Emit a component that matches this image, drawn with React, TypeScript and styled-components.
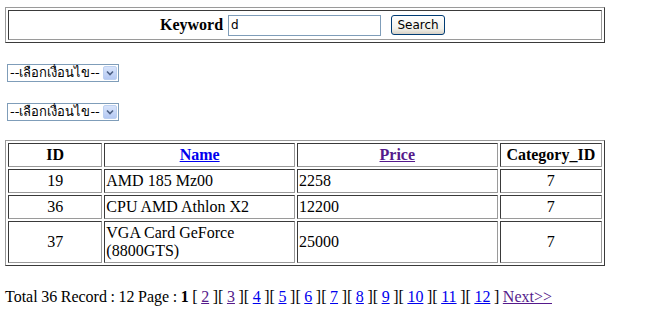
import { useState } from "react";
import styled, { createGlobalStyle } from "styled-components";

const GlobalStyle = createGlobalStyle`
  body {
    margin: 7px 5px;
    background: #ffffff;
    font-family: "Liberation Serif", "Times New Roman", serif;
    font-size: 16px;
    color: #000000;
  }
`;

const OutsetTable = styled.table<{ $w: number }>`
  width: ${({ $w }) => $w}px;
  border-collapse: separate;
  border-spacing: 2px;
  border: 1px solid;
  border-color: #9a9a9a #3a3a3a #3a3a3a #9a9a9a;
`;

const Cell = styled.td<{ $align?: string; $w?: number }>`
  border: 1px solid;
  border-color: #3a3a3a #9a9a9a #9a9a9a #3a3a3a;
  padding: 2px 1px;
  text-align: ${({ $align }) => $align || "left"};
  vertical-align: middle;
  line-height: 18px;
  ${({ $w }) => ($w ? `width: ${$w}px;` : "")}
`;

const HeadCell = styled(Cell).attrs({ as: "th" })`
  font-weight: bold;
  text-align: center;
`;

const SearchBar = styled.div`
  display: flex;
  align-items: center;
  justify-content: center;
  height: 26px;
  padding-right: 5px;
`;

const Label = styled.b`
  font-size: 16px;
  margin-right: 5px;
`;

const TextBox = styled.input`
  box-sizing: border-box;
  width: 153px;
  height: 21px;
  padding: 1px 2px;
  border: 1px solid #7f9db9;
  font-family: "DejaVu Sans", Tahoma, sans-serif;
  font-size: 12px;
  outline: none;
`;

const XpButton = styled.button`
  margin-left: 10px;
  height: 20px;
  width: 54px;
  padding: 0;
  border: 1px solid #003c74;
  border-radius: 3px;
  background: linear-gradient(#ffffff, #f2f2ec 70%, #d6d0c5);
  font-family: "DejaVu Sans", Tahoma, sans-serif;
  font-size: 12px;
  color: #000;
`;

const SelectRow = styled.div<{ $top: number }>`
  display: flex;
  margin-top: ${({ $top }) => $top}px;
  height: 18px;
  padding-left: 2px;
`;

const SelectBox = styled.div`
  display: flex;
  align-items: center;
  height: 18px;
  box-sizing: border-box;
  border: 1px solid #7f9db9;
  background: #fff;
  font-family: "DejaVu Sans", Tahoma, sans-serif;
  font-size: 13px;
`;

const SelectText = styled.span`
  padding: 0 2px 0 2px;
  line-height: 16px;
  white-space: nowrap;
`;

const ArrowBox = styled.span`
  display: flex;
  align-items: center;
  justify-content: center;
  width: 14px;
  height: 14px;
  margin: 1px;
  border-radius: 2px;
  border: 1px solid #bcd0f0;
  box-sizing: border-box;
  background: linear-gradient(#d8e4fb, #b5c9f3);
`;

const DataWrap = styled.div`
  margin-top: 19px;
`;

const Link = styled.a<{ $visited?: boolean }>`
  color: ${({ $visited }) => ($visited ? "#551a8b" : "#0000ee")};
  text-decoration: underline;
  cursor: pointer;
`;

const Footer = styled.div`
  margin-top: 21px;
  line-height: 19px;
  white-space: nowrap;
  word-spacing: -0.45px;
`;

function Chevron() {
  return (
    <svg width="8" height="6" viewBox="0 0 8 6">
      <path d="M1 1.5 L4 4.5 L7 1.5" stroke="#4d6185" strokeWidth="1.6" fill="none" />
    </svg>
  );
}

function ConditionSelect({ top }: { top: number }) {
  return (
    <SelectRow $top={top}>
      <SelectBox>
        <SelectText>--เลือกเงื่อนไข--</SelectText>
        <ArrowBox>
          <Chevron />
        </ArrowBox>
      </SelectBox>
    </SelectRow>
  );
}

const products = [
  { id: 19, name: "AMD 185 Mz00", price: 2258, cat: 7 },
  { id: 36, name: "CPU AMD Athlon X2", price: 12200, cat: 7 },
  { id: 37, name: "VGA Card GeForce (8800GTS)", price: 25000, cat: 7 },
];

const visitedPages = [2, 3];

export default function App() {
  const [keyword, setKeyword] = useState("d");

  return (
    <>
      <GlobalStyle />
      <OutsetTable $w={600}>
        <tbody>
          <tr>
            <Cell $align="center" style={{ padding: 1 }}>
              <SearchBar>
                <Label>Keyword</Label>
                <TextBox value={keyword} onChange={(e) => setKeyword(e.target.value)} />
                <XpButton>Search</XpButton>
              </SearchBar>
            </Cell>
          </tr>
        </tbody>
      </OutsetTable>

      <ConditionSelect top={21} />
      <ConditionSelect top={21} />

      <DataWrap>
        <OutsetTable $w={600}>
          <thead>
            <tr>
              <HeadCell $w={90}>ID</HeadCell>
              <HeadCell $w={186}>
                <Link>Name</Link>
              </HeadCell>
              <HeadCell $w={196}>
                <Link $visited>Price</Link>
              </HeadCell>
              <HeadCell $w={98}>Category_ID</HeadCell>
            </tr>
          </thead>
          <tbody>
            {products.map((p) => (
              <tr key={p.id}>
                <Cell $align="center">{p.id}</Cell>
                <Cell>{p.name}</Cell>
                <Cell>{p.price}</Cell>
                <Cell $align="center">{p.cat}</Cell>
              </tr>
            ))}
          </tbody>
        </OutsetTable>
      </DataWrap>

      <Footer>
        Total 36 Record : 12 Page : <b>1</b> [{" "}
        {Array.from({ length: 11 }, (_, i) => i + 2).map((n, i) => (
          <span key={n}>
            {i > 0 && "][ "}
            <Link $visited={visitedPages.includes(n)}>{n}</Link>{" "}
          </span>
        ))}
        ] <Link $visited>Next&gt;&gt;</Link>
      </Footer>
    </>
  );
}
